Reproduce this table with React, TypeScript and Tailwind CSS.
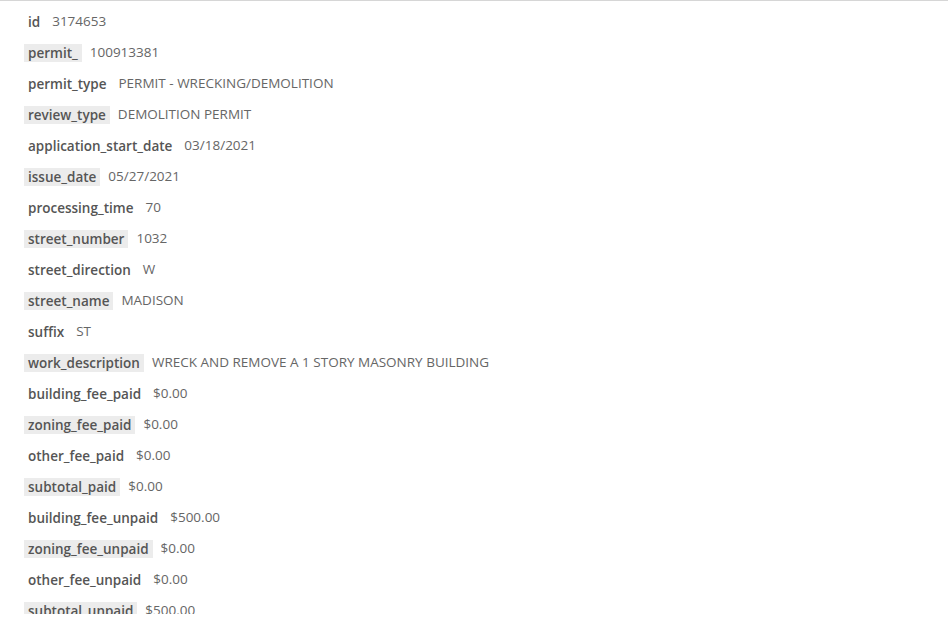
import React, { type FC } from "react";

type Field = { key: string; value: string };

const fields: Field[] = [
  { key: "id", value: "3174653" },
  { key: "permit_", value: "100913381" },
  { key: "permit_type", value: "PERMIT - WRECKING/DEMOLITION" },
  { key: "review_type", value: "DEMOLITION PERMIT" },
  { key: "application_start_date", value: "03/18/2021" },
  { key: "issue_date", value: "05/27/2021" },
  { key: "processing_time", value: "70" },
  { key: "street_number", value: "1032" },
  { key: "street_direction", value: "W" },
  { key: "street_name", value: "MADISON" },
  { key: "suffix", value: "ST" },
  { key: "work_description", value: "WRECK AND REMOVE A 1 STORY MASONRY BUILDING" },
  { key: "building_fee_paid", value: "$0.00" },
  { key: "zoning_fee_paid", value: "$0.00" },
  { key: "other_fee_paid", value: "$0.00" },
  { key: "subtotal_paid", value: "$0.00" },
  { key: "building_fee_unpaid", value: "$500.00" },
  { key: "zoning_fee_unpaid", value: "$0.00" },
  { key: "other_fee_unpaid", value: "$0.00" },
  { key: "subtotal_unpaid", value: "$500.00" },
];

const FieldRow: FC<{ field: Field; shaded: boolean }> = ({ field, shaded }) => (
  <div className="flex items-center h-[31px] pl-6">
    <span
      className={`px-1 leading-[18px] text-[13.5px] font-semibold text-[#555] ${
        shaded ? "bg-[#ececec]" : ""
      }`}
    >
      {field.key}
    </span>
    <span className="ml-2 text-[13.5px] text-[#666]">{field.value}</span>
  </div>
);

const App: FC = () => {
  return (
    <div
      className="w-[948px] h-[630px] bg-white"
      style={{ fontFamily: '"Open Sans", "Liberation Sans", sans-serif' }}
    >
      <div className="h-[614px] overflow-hidden border-t border-[#d6d6d6] pt-[5px]">
        {fields.map((f, i) => (
          <FieldRow key={f.key} field={f} shaded={i % 2 === 1} />
        ))}
      </div>
    </div>
  );
};

export default App;
